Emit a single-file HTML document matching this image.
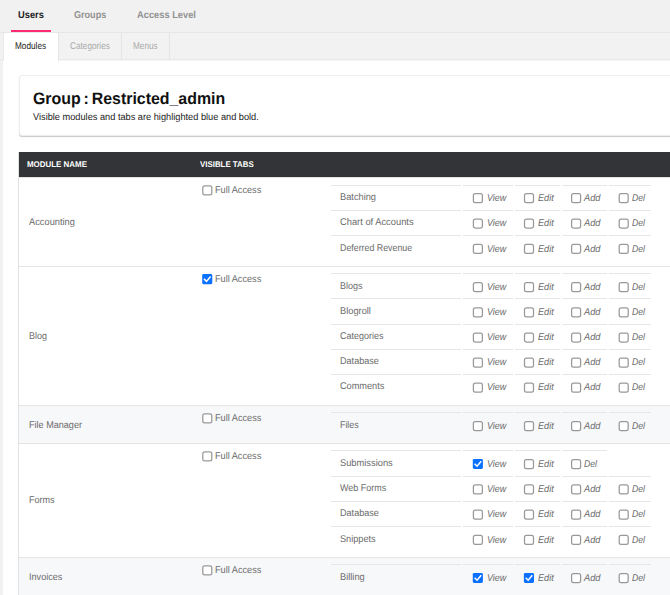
<!DOCTYPE html><html lang="en"><head><meta charset="utf-8"><title>Group : Restricted_admin</title>
<style>
html,body{margin:0;padding:0}
body{width:670px;height:595px;overflow:hidden;background:#f1f1f1;font-family:"Liberation Sans", sans-serif;position:relative;color:#555;text-rendering:geometricPrecision}
#p{position:absolute;left:0;top:0;width:670px;height:595px;overflow:hidden}
.t{position:absolute;white-space:nowrap;transform-origin:0 50%;display:block}
.nav{font-size:10px;font-weight:bold;color:#929292;line-height:12px}
.nav.on{color:#222}
.ul{position:absolute;left:11px;top:30px;width:40px;height:2px;background:#ff2a70}
.hr{position:absolute;left:0;top:32px;width:670px;height:1px;background:#e6e6e6}
.tabs{position:absolute;left:0;top:33px;width:670px;height:27px;background:#f2f2f2;border-bottom:1px solid #e9e9e9;box-sizing:border-box}
.tab{position:absolute;top:33px;height:27px;border-right:1px solid #e5e5e5;box-sizing:border-box}
.tab.on{background:#fff;height:28px;border-left:1px solid #e9e9e9}
.st{font-size:9.75px;color:#aaa;line-height:12px}
.st.on{color:#222}
.content{position:absolute;left:3px;top:60px;width:680px;height:560px;background:#fff;border-top:1px solid #f6f6f6;box-sizing:border-box}
.card{position:absolute;left:19px;top:75px;width:680px;height:61px;box-sizing:border-box;background:#fff;border:1px solid #ededed;border-radius:3px;box-shadow:0 1px 1px rgba(0,0,0,.22)}
.h1{font-size:16.5px;font-weight:bold;color:#111;line-height:20px;word-spacing:-1.6px}
.sub{font-size:9.8px;color:#222;line-height:12px}
.thead{position:absolute;left:19px;top:152px;width:680px;height:25px;background:#323437}
.th{font-size:8.25px;font-weight:bold;color:#fff;line-height:10px}
.tbl{position:absolute;left:18px;top:152px;width:1px;height:460px;background:#e2e2e2}
.row{position:absolute;left:19px;width:680px;border-top:1px solid #e4e4e4;box-sizing:border-box;background:#fff}
.row.alt{background:#f7f8fa}
.mod{font-size:9.8px;color:#6b6b6b;line-height:12px}
.fa{font-size:9.8px;color:#6b6b6b;line-height:12px}
.lbl{font-size:9.8px;color:#6b6b6b;line-height:12px}
.act{font-size:9.8px;font-style:italic;color:#6b6b6b;line-height:12px}
.cell{position:absolute;height:1px;background:#e6e6e6}
.cb{position:absolute;display:block;overflow:visible}
</style></head><body><div id="p">
<span class="t nav on" id="nav1" style="left:18.20px;top:10px;transform:scaleX(0.9306);">Users</span>
<span class="t nav" id="nav2" style="left:74.30px;top:10px;transform:scaleX(0.9060);">Groups</span>
<span class="t nav" id="nav3" style="left:137.00px;top:10px;transform:scaleX(0.9300);">Access Level</span>
<div class="ul"></div><div class="hr"></div>
<div class="tabs"></div>
<div class="content"></div>
<div class="tab on" style="left:3px;width:56px"></div>
<div class="tab" style="left:59px;width:63px"></div>
<div class="tab" style="left:122px;width:48px"></div>
<span class="t st on" id="st1" style="left:15.00px;top:41px;transform:scaleX(0.8429);">Modules</span>
<span class="t st" id="st2" style="left:70.00px;top:41px;transform:scaleX(0.8463);">Categories</span>
<span class="t st" id="st3" style="left:133.00px;top:41px;transform:scaleX(0.8409);">Menus</span>
<div class="card"></div>
<span class="t h1" id="h1" style="left:33.30px;top:89px;transform:scaleX(0.9638);">Group : Restricted_admin</span>
<span class="t sub" id="sub" style="left:33.30px;top:112px;transform:scaleX(0.9408);">Visible modules and tabs are highlighted blue and bold.</span>
<div class="thead"></div><div class="tbl"></div>
<span class="t th" id="th1" style="left:26.80px;top:160px;transform:scaleX(0.9622);">MODULE NAME</span>
<span class="t th" id="th2" style="left:200.40px;top:160px;transform:scaleX(0.9560);">VISIBLE TABS</span>
<div class="row" style="top:177px;height:89px"></div>
<span class="t mod" id="mod1" style="left:29.00px;top:217px;transform:scaleX(0.9480);">Accounting</span>
<svg class="cb" style="left:201px;top:184px" width="14" height="14" viewBox="0 0 14 14"><rect x="1.80" y="1.90" width="9.0" height="9.0" rx="1.9" fill="#fff" stroke="#999" stroke-width="1.25"/></svg>
<span class="t fa" id="fa1" style="left:215.00px;top:185px;transform:scaleX(0.9330);">Full Access</span>
<div class="cell" style="left:331px;top:185px;width:130px"></div>
<div class="cell" style="left:463px;top:185px;width:50px"></div>
<div class="cell" style="left:515px;top:185px;width:45px"></div>
<div class="cell" style="left:562px;top:185px;width:45px"></div>
<div class="cell" style="left:609px;top:185px;width:42px"></div>
<span class="t lbl" id="l1_1" style="left:339.80px;top:192px;transform:scaleX(0.9440);">Batching</span>
<svg class="cb" style="left:471px;top:191px" width="14" height="14" viewBox="0 0 14 14"><rect x="2.40" y="2.70" width="9.0" height="9.0" rx="1.9" fill="#fff" stroke="#999" stroke-width="1.25"/></svg>
<span class="t act" id="a1_1_0" style="left:486.60px;top:193px;transform:scaleX(0.92);">View</span>
<svg class="cb" style="left:522px;top:191px" width="14" height="14" viewBox="0 0 14 14"><rect x="2.50" y="2.70" width="9.0" height="9.0" rx="1.9" fill="#fff" stroke="#999" stroke-width="1.25"/></svg>
<span class="t act" id="a1_1_1" style="left:537.60px;top:193px;transform:scaleX(0.93);">Edit</span>
<svg class="cb" style="left:570px;top:191px" width="14" height="14" viewBox="0 0 14 14"><rect x="1.60" y="2.70" width="9.0" height="9.0" rx="1.9" fill="#fff" stroke="#999" stroke-width="1.25"/></svg>
<span class="t act" id="a1_1_2" style="left:584.10px;top:193px;transform:scaleX(0.938);">Add</span>
<svg class="cb" style="left:617px;top:191px" width="14" height="14" viewBox="0 0 14 14"><rect x="2.20" y="2.70" width="9.0" height="9.0" rx="1.9" fill="#fff" stroke="#999" stroke-width="1.25"/></svg>
<span class="t act" id="a1_1_3" style="left:632.00px;top:193px;transform:scaleX(0.888);">Del</span>
<div class="cell" style="left:331px;top:210px;width:130px"></div>
<div class="cell" style="left:463px;top:210px;width:50px"></div>
<div class="cell" style="left:515px;top:210px;width:45px"></div>
<div class="cell" style="left:562px;top:210px;width:45px"></div>
<div class="cell" style="left:609px;top:210px;width:42px"></div>
<span class="t lbl" id="l1_2" style="left:339.80px;top:217px;transform:scaleX(0.9513);">Chart of Accounts</span>
<svg class="cb" style="left:471px;top:217px" width="14" height="14" viewBox="0 0 14 14"><rect x="2.40" y="2.00" width="9.0" height="9.0" rx="1.9" fill="#fff" stroke="#999" stroke-width="1.25"/></svg>
<span class="t act" id="a1_2_0" style="left:486.60px;top:218px;transform:scaleX(0.92);">View</span>
<svg class="cb" style="left:522px;top:217px" width="14" height="14" viewBox="0 0 14 14"><rect x="2.50" y="2.00" width="9.0" height="9.0" rx="1.9" fill="#fff" stroke="#999" stroke-width="1.25"/></svg>
<span class="t act" id="a1_2_1" style="left:537.60px;top:218px;transform:scaleX(0.93);">Edit</span>
<svg class="cb" style="left:570px;top:217px" width="14" height="14" viewBox="0 0 14 14"><rect x="1.60" y="2.00" width="9.0" height="9.0" rx="1.9" fill="#fff" stroke="#999" stroke-width="1.25"/></svg>
<span class="t act" id="a1_2_2" style="left:584.10px;top:218px;transform:scaleX(0.938);">Add</span>
<svg class="cb" style="left:617px;top:217px" width="14" height="14" viewBox="0 0 14 14"><rect x="2.20" y="2.00" width="9.0" height="9.0" rx="1.9" fill="#fff" stroke="#999" stroke-width="1.25"/></svg>
<span class="t act" id="a1_2_3" style="left:632.00px;top:218px;transform:scaleX(0.888);">Del</span>
<div class="cell" style="left:331px;top:235px;width:130px"></div>
<div class="cell" style="left:463px;top:235px;width:50px"></div>
<div class="cell" style="left:515px;top:235px;width:45px"></div>
<div class="cell" style="left:562px;top:235px;width:45px"></div>
<div class="cell" style="left:609px;top:235px;width:42px"></div>
<span class="t lbl" id="l1_3" style="left:339.80px;top:243px;transform:scaleX(0.9011);">Deferred Revenue</span>
<svg class="cb" style="left:471px;top:242px" width="14" height="14" viewBox="0 0 14 14"><rect x="2.40" y="2.30" width="9.0" height="9.0" rx="1.9" fill="#fff" stroke="#999" stroke-width="1.25"/></svg>
<span class="t act" id="a1_3_0" style="left:486.60px;top:244px;transform:scaleX(0.92);">View</span>
<svg class="cb" style="left:522px;top:242px" width="14" height="14" viewBox="0 0 14 14"><rect x="2.50" y="2.30" width="9.0" height="9.0" rx="1.9" fill="#fff" stroke="#999" stroke-width="1.25"/></svg>
<span class="t act" id="a1_3_1" style="left:537.60px;top:244px;transform:scaleX(0.93);">Edit</span>
<svg class="cb" style="left:570px;top:242px" width="14" height="14" viewBox="0 0 14 14"><rect x="1.60" y="2.30" width="9.0" height="9.0" rx="1.9" fill="#fff" stroke="#999" stroke-width="1.25"/></svg>
<span class="t act" id="a1_3_2" style="left:584.10px;top:244px;transform:scaleX(0.938);">Add</span>
<svg class="cb" style="left:617px;top:242px" width="14" height="14" viewBox="0 0 14 14"><rect x="2.20" y="2.30" width="9.0" height="9.0" rx="1.9" fill="#fff" stroke="#999" stroke-width="1.25"/></svg>
<span class="t act" id="a1_3_3" style="left:632.00px;top:244px;transform:scaleX(0.888);">Del</span>
<div class="row" style="top:266px;height:139px"></div>
<span class="t mod" id="mod2" style="left:29.00px;top:331px;transform:scaleX(0.9236);">Blog</span>
<svg class="cb" style="left:201px;top:273px" width="14" height="14" viewBox="0 0 14 14"><rect x="1.20" y="1.10" width="10.1" height="10.1" rx="1.4" fill="#0a70ff"/><path d="M3.50 6.40 L5.50 8.40 L9.10 4.00" fill="none" stroke="#fff" stroke-width="1.5" stroke-linecap="square" stroke-linejoin="miter"/></svg>
<span class="t fa" id="fa2" style="left:215.00px;top:274px;transform:scaleX(0.9330);">Full Access</span>
<div class="cell" style="left:331px;top:273px;width:130px"></div>
<div class="cell" style="left:463px;top:273px;width:50px"></div>
<div class="cell" style="left:515px;top:273px;width:45px"></div>
<div class="cell" style="left:562px;top:273px;width:45px"></div>
<div class="cell" style="left:609px;top:273px;width:42px"></div>
<span class="t lbl" id="l2_1" style="left:339.80px;top:281px;transform:scaleX(0.9193);">Blogs</span>
<svg class="cb" style="left:471px;top:280px" width="14" height="14" viewBox="0 0 14 14"><rect x="2.40" y="2.70" width="9.0" height="9.0" rx="1.9" fill="#fff" stroke="#999" stroke-width="1.25"/></svg>
<span class="t act" id="a2_1_0" style="left:486.60px;top:282px;transform:scaleX(0.92);">View</span>
<svg class="cb" style="left:522px;top:280px" width="14" height="14" viewBox="0 0 14 14"><rect x="2.50" y="2.70" width="9.0" height="9.0" rx="1.9" fill="#fff" stroke="#999" stroke-width="1.25"/></svg>
<span class="t act" id="a2_1_1" style="left:537.60px;top:282px;transform:scaleX(0.93);">Edit</span>
<svg class="cb" style="left:570px;top:280px" width="14" height="14" viewBox="0 0 14 14"><rect x="1.60" y="2.70" width="9.0" height="9.0" rx="1.9" fill="#fff" stroke="#999" stroke-width="1.25"/></svg>
<span class="t act" id="a2_1_2" style="left:584.10px;top:282px;transform:scaleX(0.938);">Add</span>
<svg class="cb" style="left:617px;top:280px" width="14" height="14" viewBox="0 0 14 14"><rect x="2.20" y="2.70" width="9.0" height="9.0" rx="1.9" fill="#fff" stroke="#999" stroke-width="1.25"/></svg>
<span class="t act" id="a2_1_3" style="left:632.00px;top:282px;transform:scaleX(0.888);">Del</span>
<div class="cell" style="left:331px;top:298px;width:130px"></div>
<div class="cell" style="left:463px;top:298px;width:50px"></div>
<div class="cell" style="left:515px;top:298px;width:45px"></div>
<div class="cell" style="left:562px;top:298px;width:45px"></div>
<div class="cell" style="left:609px;top:298px;width:42px"></div>
<span class="t lbl" id="l2_2" style="left:339.80px;top:306px;transform:scaleX(0.9462);">Blogroll</span>
<svg class="cb" style="left:471px;top:306px" width="14" height="14" viewBox="0 0 14 14"><rect x="2.40" y="1.80" width="9.0" height="9.0" rx="1.9" fill="#fff" stroke="#999" stroke-width="1.25"/></svg>
<span class="t act" id="a2_2_0" style="left:486.60px;top:307px;transform:scaleX(0.92);">View</span>
<svg class="cb" style="left:522px;top:306px" width="14" height="14" viewBox="0 0 14 14"><rect x="2.50" y="1.80" width="9.0" height="9.0" rx="1.9" fill="#fff" stroke="#999" stroke-width="1.25"/></svg>
<span class="t act" id="a2_2_1" style="left:537.60px;top:307px;transform:scaleX(0.93);">Edit</span>
<svg class="cb" style="left:570px;top:306px" width="14" height="14" viewBox="0 0 14 14"><rect x="1.60" y="1.80" width="9.0" height="9.0" rx="1.9" fill="#fff" stroke="#999" stroke-width="1.25"/></svg>
<span class="t act" id="a2_2_2" style="left:584.10px;top:307px;transform:scaleX(0.938);">Add</span>
<svg class="cb" style="left:617px;top:306px" width="14" height="14" viewBox="0 0 14 14"><rect x="2.20" y="1.80" width="9.0" height="9.0" rx="1.9" fill="#fff" stroke="#999" stroke-width="1.25"/></svg>
<span class="t act" id="a2_2_3" style="left:632.00px;top:307px;transform:scaleX(0.888);">Del</span>
<div class="cell" style="left:331px;top:324px;width:130px"></div>
<div class="cell" style="left:463px;top:324px;width:50px"></div>
<div class="cell" style="left:515px;top:324px;width:45px"></div>
<div class="cell" style="left:562px;top:324px;width:45px"></div>
<div class="cell" style="left:609px;top:324px;width:42px"></div>
<span class="t lbl" id="l2_3" style="left:339.80px;top:331px;transform:scaleX(0.9167);">Categories</span>
<svg class="cb" style="left:471px;top:331px" width="14" height="14" viewBox="0 0 14 14"><rect x="2.40" y="2.00" width="9.0" height="9.0" rx="1.9" fill="#fff" stroke="#999" stroke-width="1.25"/></svg>
<span class="t act" id="a2_3_0" style="left:486.60px;top:332px;transform:scaleX(0.92);">View</span>
<svg class="cb" style="left:522px;top:331px" width="14" height="14" viewBox="0 0 14 14"><rect x="2.50" y="2.00" width="9.0" height="9.0" rx="1.9" fill="#fff" stroke="#999" stroke-width="1.25"/></svg>
<span class="t act" id="a2_3_1" style="left:537.60px;top:332px;transform:scaleX(0.93);">Edit</span>
<svg class="cb" style="left:570px;top:331px" width="14" height="14" viewBox="0 0 14 14"><rect x="1.60" y="2.00" width="9.0" height="9.0" rx="1.9" fill="#fff" stroke="#999" stroke-width="1.25"/></svg>
<span class="t act" id="a2_3_2" style="left:584.10px;top:332px;transform:scaleX(0.938);">Add</span>
<svg class="cb" style="left:617px;top:331px" width="14" height="14" viewBox="0 0 14 14"><rect x="2.20" y="2.00" width="9.0" height="9.0" rx="1.9" fill="#fff" stroke="#999" stroke-width="1.25"/></svg>
<span class="t act" id="a2_3_3" style="left:632.00px;top:332px;transform:scaleX(0.888);">Del</span>
<div class="cell" style="left:331px;top:349px;width:130px"></div>
<div class="cell" style="left:463px;top:349px;width:50px"></div>
<div class="cell" style="left:515px;top:349px;width:45px"></div>
<div class="cell" style="left:562px;top:349px;width:45px"></div>
<div class="cell" style="left:609px;top:349px;width:42px"></div>
<span class="t lbl" id="l2_4" style="left:339.80px;top:356px;transform:scaleX(0.9275);">Database</span>
<svg class="cb" style="left:471px;top:356px" width="14" height="14" viewBox="0 0 14 14"><rect x="2.40" y="2.10" width="9.0" height="9.0" rx="1.9" fill="#fff" stroke="#999" stroke-width="1.25"/></svg>
<span class="t act" id="a2_4_0" style="left:486.60px;top:357px;transform:scaleX(0.92);">View</span>
<svg class="cb" style="left:522px;top:356px" width="14" height="14" viewBox="0 0 14 14"><rect x="2.50" y="2.10" width="9.0" height="9.0" rx="1.9" fill="#fff" stroke="#999" stroke-width="1.25"/></svg>
<span class="t act" id="a2_4_1" style="left:537.60px;top:357px;transform:scaleX(0.93);">Edit</span>
<svg class="cb" style="left:570px;top:356px" width="14" height="14" viewBox="0 0 14 14"><rect x="1.60" y="2.10" width="9.0" height="9.0" rx="1.9" fill="#fff" stroke="#999" stroke-width="1.25"/></svg>
<span class="t act" id="a2_4_2" style="left:584.10px;top:357px;transform:scaleX(0.938);">Add</span>
<svg class="cb" style="left:617px;top:356px" width="14" height="14" viewBox="0 0 14 14"><rect x="2.20" y="2.10" width="9.0" height="9.0" rx="1.9" fill="#fff" stroke="#999" stroke-width="1.25"/></svg>
<span class="t act" id="a2_4_3" style="left:632.00px;top:357px;transform:scaleX(0.888);">Del</span>
<div class="cell" style="left:331px;top:374px;width:130px"></div>
<div class="cell" style="left:463px;top:374px;width:50px"></div>
<div class="cell" style="left:515px;top:374px;width:45px"></div>
<div class="cell" style="left:562px;top:374px;width:45px"></div>
<div class="cell" style="left:609px;top:374px;width:42px"></div>
<span class="t lbl" id="l2_5" style="left:339.80px;top:381px;transform:scaleX(0.9363);">Comments</span>
<svg class="cb" style="left:471px;top:381px" width="14" height="14" viewBox="0 0 14 14"><rect x="2.40" y="2.20" width="9.0" height="9.0" rx="1.9" fill="#fff" stroke="#999" stroke-width="1.25"/></svg>
<span class="t act" id="a2_5_0" style="left:486.60px;top:382px;transform:scaleX(0.92);">View</span>
<svg class="cb" style="left:522px;top:381px" width="14" height="14" viewBox="0 0 14 14"><rect x="2.50" y="2.20" width="9.0" height="9.0" rx="1.9" fill="#fff" stroke="#999" stroke-width="1.25"/></svg>
<span class="t act" id="a2_5_1" style="left:537.60px;top:382px;transform:scaleX(0.93);">Edit</span>
<svg class="cb" style="left:570px;top:381px" width="14" height="14" viewBox="0 0 14 14"><rect x="1.60" y="2.20" width="9.0" height="9.0" rx="1.9" fill="#fff" stroke="#999" stroke-width="1.25"/></svg>
<span class="t act" id="a2_5_2" style="left:584.10px;top:382px;transform:scaleX(0.938);">Add</span>
<svg class="cb" style="left:617px;top:381px" width="14" height="14" viewBox="0 0 14 14"><rect x="2.20" y="2.20" width="9.0" height="9.0" rx="1.9" fill="#fff" stroke="#999" stroke-width="1.25"/></svg>
<span class="t act" id="a2_5_3" style="left:632.00px;top:382px;transform:scaleX(0.888);">Del</span>
<div class="row alt" style="top:405px;height:38px"></div>
<span class="t mod" id="mod3" style="left:29.00px;top:420px;transform:scaleX(0.9261);">File Manager</span>
<svg class="cb" style="left:201px;top:412px" width="14" height="14" viewBox="0 0 14 14"><rect x="1.80" y="1.90" width="9.0" height="9.0" rx="1.9" fill="#fff" stroke="#999" stroke-width="1.25"/></svg>
<span class="t fa" id="fa3" style="left:215.00px;top:413px;transform:scaleX(0.9362);">Full Access</span>
<div class="cell" style="left:331px;top:412px;width:130px"></div>
<div class="cell" style="left:463px;top:412px;width:50px"></div>
<div class="cell" style="left:515px;top:412px;width:45px"></div>
<div class="cell" style="left:562px;top:412px;width:45px"></div>
<div class="cell" style="left:609px;top:412px;width:42px"></div>
<span class="t lbl" id="l3_1" style="left:339.80px;top:420px;transform:scaleX(0.9012);">Files</span>
<svg class="cb" style="left:471px;top:419px" width="14" height="14" viewBox="0 0 14 14"><rect x="2.40" y="2.60" width="9.0" height="9.0" rx="1.9" fill="#fff" stroke="#999" stroke-width="1.25"/></svg>
<span class="t act" id="a3_1_0" style="left:486.60px;top:421px;transform:scaleX(0.92);">View</span>
<svg class="cb" style="left:522px;top:419px" width="14" height="14" viewBox="0 0 14 14"><rect x="2.50" y="2.60" width="9.0" height="9.0" rx="1.9" fill="#fff" stroke="#999" stroke-width="1.25"/></svg>
<span class="t act" id="a3_1_1" style="left:537.60px;top:421px;transform:scaleX(0.93);">Edit</span>
<svg class="cb" style="left:570px;top:419px" width="14" height="14" viewBox="0 0 14 14"><rect x="1.60" y="2.60" width="9.0" height="9.0" rx="1.9" fill="#fff" stroke="#999" stroke-width="1.25"/></svg>
<span class="t act" id="a3_1_2" style="left:584.10px;top:421px;transform:scaleX(0.938);">Add</span>
<svg class="cb" style="left:617px;top:419px" width="14" height="14" viewBox="0 0 14 14"><rect x="2.20" y="2.60" width="9.0" height="9.0" rx="1.9" fill="#fff" stroke="#999" stroke-width="1.25"/></svg>
<span class="t act" id="a3_1_3" style="left:632.00px;top:421px;transform:scaleX(0.888);">Del</span>
<div class="row" style="top:443px;height:114px"></div>
<span class="t mod" id="mod4" style="left:29.00px;top:495px;transform:scaleX(0.9230);">Forms</span>
<svg class="cb" style="left:201px;top:450px" width="14" height="14" viewBox="0 0 14 14"><rect x="1.80" y="1.90" width="9.0" height="9.0" rx="1.9" fill="#fff" stroke="#999" stroke-width="1.25"/></svg>
<span class="t fa" id="fa4" style="left:215.00px;top:451px;transform:scaleX(0.9330);">Full Access</span>
<div class="cell" style="left:331px;top:450px;width:130px"></div>
<div class="cell" style="left:463px;top:450px;width:50px"></div>
<div class="cell" style="left:515px;top:450px;width:45px"></div>
<div class="cell" style="left:562px;top:450px;width:45px"></div>
<span class="t lbl" id="l4_1" style="left:339.80px;top:458px;transform:scaleX(0.9490);">Submissions</span>
<svg class="cb" style="left:471px;top:457px" width="14" height="14" viewBox="0 0 14 14"><rect x="1.80" y="1.90" width="10.1" height="10.1" rx="1.4" fill="#0a70ff"/><path d="M4.10 7.20 L6.10 9.20 L9.70 4.80" fill="none" stroke="#fff" stroke-width="1.5" stroke-linecap="square" stroke-linejoin="miter"/></svg>
<span class="t act" id="a4_1_0" style="left:486.60px;top:459px;transform:scaleX(0.92);">View</span>
<svg class="cb" style="left:522px;top:457px" width="14" height="14" viewBox="0 0 14 14"><rect x="2.50" y="2.70" width="9.0" height="9.0" rx="1.9" fill="#fff" stroke="#999" stroke-width="1.25"/></svg>
<span class="t act" id="a4_1_1" style="left:537.60px;top:459px;transform:scaleX(0.93);">Edit</span>
<svg class="cb" style="left:570px;top:457px" width="14" height="14" viewBox="0 0 14 14"><rect x="1.60" y="2.70" width="9.0" height="9.0" rx="1.9" fill="#fff" stroke="#999" stroke-width="1.25"/></svg>
<span class="t act" id="a4_1_2" style="left:584.10px;top:459px;transform:scaleX(0.888);">Del</span>
<div class="cell" style="left:331px;top:476px;width:130px"></div>
<div class="cell" style="left:463px;top:476px;width:50px"></div>
<div class="cell" style="left:515px;top:476px;width:45px"></div>
<div class="cell" style="left:562px;top:476px;width:45px"></div>
<div class="cell" style="left:609px;top:476px;width:42px"></div>
<span class="t lbl" id="l4_2" style="left:339.80px;top:483px;transform:scaleX(0.9142);">Web Forms</span>
<svg class="cb" style="left:471px;top:483px" width="14" height="14" viewBox="0 0 14 14"><rect x="2.40" y="1.90" width="9.0" height="9.0" rx="1.9" fill="#fff" stroke="#999" stroke-width="1.25"/></svg>
<span class="t act" id="a4_2_0" style="left:486.60px;top:484px;transform:scaleX(0.92);">View</span>
<svg class="cb" style="left:522px;top:483px" width="14" height="14" viewBox="0 0 14 14"><rect x="2.50" y="1.90" width="9.0" height="9.0" rx="1.9" fill="#fff" stroke="#999" stroke-width="1.25"/></svg>
<span class="t act" id="a4_2_1" style="left:537.60px;top:484px;transform:scaleX(0.93);">Edit</span>
<svg class="cb" style="left:570px;top:483px" width="14" height="14" viewBox="0 0 14 14"><rect x="1.60" y="1.90" width="9.0" height="9.0" rx="1.9" fill="#fff" stroke="#999" stroke-width="1.25"/></svg>
<span class="t act" id="a4_2_2" style="left:584.10px;top:484px;transform:scaleX(0.938);">Add</span>
<svg class="cb" style="left:617px;top:483px" width="14" height="14" viewBox="0 0 14 14"><rect x="2.20" y="1.90" width="9.0" height="9.0" rx="1.9" fill="#fff" stroke="#999" stroke-width="1.25"/></svg>
<span class="t act" id="a4_2_3" style="left:632.00px;top:484px;transform:scaleX(0.888);">Del</span>
<div class="cell" style="left:331px;top:501px;width:130px"></div>
<div class="cell" style="left:463px;top:501px;width:50px"></div>
<div class="cell" style="left:515px;top:501px;width:45px"></div>
<div class="cell" style="left:562px;top:501px;width:45px"></div>
<div class="cell" style="left:609px;top:501px;width:42px"></div>
<span class="t lbl" id="l4_3" style="left:339.80px;top:508px;transform:scaleX(0.9275);">Database</span>
<svg class="cb" style="left:471px;top:508px" width="14" height="14" viewBox="0 0 14 14"><rect x="2.40" y="2.10" width="9.0" height="9.0" rx="1.9" fill="#fff" stroke="#999" stroke-width="1.25"/></svg>
<span class="t act" id="a4_3_0" style="left:486.60px;top:509px;transform:scaleX(0.92);">View</span>
<svg class="cb" style="left:522px;top:508px" width="14" height="14" viewBox="0 0 14 14"><rect x="2.50" y="2.10" width="9.0" height="9.0" rx="1.9" fill="#fff" stroke="#999" stroke-width="1.25"/></svg>
<span class="t act" id="a4_3_1" style="left:537.60px;top:509px;transform:scaleX(0.93);">Edit</span>
<svg class="cb" style="left:570px;top:508px" width="14" height="14" viewBox="0 0 14 14"><rect x="1.60" y="2.10" width="9.0" height="9.0" rx="1.9" fill="#fff" stroke="#999" stroke-width="1.25"/></svg>
<span class="t act" id="a4_3_2" style="left:584.10px;top:509px;transform:scaleX(0.938);">Add</span>
<svg class="cb" style="left:617px;top:508px" width="14" height="14" viewBox="0 0 14 14"><rect x="2.20" y="2.10" width="9.0" height="9.0" rx="1.9" fill="#fff" stroke="#999" stroke-width="1.25"/></svg>
<span class="t act" id="a4_3_3" style="left:632.00px;top:509px;transform:scaleX(0.888);">Del</span>
<div class="cell" style="left:331px;top:526px;width:130px"></div>
<div class="cell" style="left:463px;top:526px;width:50px"></div>
<div class="cell" style="left:515px;top:526px;width:45px"></div>
<div class="cell" style="left:562px;top:526px;width:45px"></div>
<div class="cell" style="left:609px;top:526px;width:42px"></div>
<span class="t lbl" id="l4_4" style="left:339.80px;top:534px;transform:scaleX(0.9347);">Snippets</span>
<svg class="cb" style="left:471px;top:533px" width="14" height="14" viewBox="0 0 14 14"><rect x="2.40" y="2.30" width="9.0" height="9.0" rx="1.9" fill="#fff" stroke="#999" stroke-width="1.25"/></svg>
<span class="t act" id="a4_4_0" style="left:486.60px;top:535px;transform:scaleX(0.92);">View</span>
<svg class="cb" style="left:522px;top:533px" width="14" height="14" viewBox="0 0 14 14"><rect x="2.50" y="2.30" width="9.0" height="9.0" rx="1.9" fill="#fff" stroke="#999" stroke-width="1.25"/></svg>
<span class="t act" id="a4_4_1" style="left:537.60px;top:535px;transform:scaleX(0.93);">Edit</span>
<svg class="cb" style="left:570px;top:533px" width="14" height="14" viewBox="0 0 14 14"><rect x="1.60" y="2.30" width="9.0" height="9.0" rx="1.9" fill="#fff" stroke="#999" stroke-width="1.25"/></svg>
<span class="t act" id="a4_4_2" style="left:584.10px;top:535px;transform:scaleX(0.938);">Add</span>
<svg class="cb" style="left:617px;top:533px" width="14" height="14" viewBox="0 0 14 14"><rect x="2.20" y="2.30" width="9.0" height="9.0" rx="1.9" fill="#fff" stroke="#999" stroke-width="1.25"/></svg>
<span class="t act" id="a4_4_3" style="left:632.00px;top:535px;transform:scaleX(0.888);">Del</span>
<div class="row alt" style="top:557px;height:60px"></div>
<span class="t mod" id="mod5" style="left:29.00px;top:572px;transform:scaleX(0.9281);">Invoices</span>
<svg class="cb" style="left:201px;top:564px" width="14" height="14" viewBox="0 0 14 14"><rect x="1.80" y="1.90" width="9.0" height="9.0" rx="1.9" fill="#fff" stroke="#999" stroke-width="1.25"/></svg>
<span class="t fa" id="fa5" style="left:215.00px;top:565px;transform:scaleX(0.9362);">Full Access</span>
<div class="cell" style="left:331px;top:564px;width:130px"></div>
<div class="cell" style="left:463px;top:564px;width:50px"></div>
<div class="cell" style="left:515px;top:564px;width:45px"></div>
<div class="cell" style="left:562px;top:564px;width:45px"></div>
<div class="cell" style="left:609px;top:564px;width:42px"></div>
<span class="t lbl" id="l5_1" style="left:339.80px;top:572px;transform:scaleX(0.9444);">Billing</span>
<svg class="cb" style="left:471px;top:571px" width="14" height="14" viewBox="0 0 14 14"><rect x="1.80" y="1.90" width="10.1" height="10.1" rx="1.4" fill="#0a70ff"/><path d="M4.10 7.20 L6.10 9.20 L9.70 4.80" fill="none" stroke="#fff" stroke-width="1.5" stroke-linecap="square" stroke-linejoin="miter"/></svg>
<span class="t act" id="a5_1_0" style="left:486.60px;top:573px;transform:scaleX(0.92);">View</span>
<svg class="cb" style="left:522px;top:571px" width="14" height="14" viewBox="0 0 14 14"><rect x="1.90" y="1.90" width="10.1" height="10.1" rx="1.4" fill="#0a70ff"/><path d="M4.20 7.20 L6.20 9.20 L9.80 4.80" fill="none" stroke="#fff" stroke-width="1.5" stroke-linecap="square" stroke-linejoin="miter"/></svg>
<span class="t act" id="a5_1_1" style="left:537.60px;top:573px;transform:scaleX(0.93);">Edit</span>
<svg class="cb" style="left:570px;top:571px" width="14" height="14" viewBox="0 0 14 14"><rect x="1.60" y="2.70" width="9.0" height="9.0" rx="1.9" fill="#fff" stroke="#999" stroke-width="1.25"/></svg>
<span class="t act" id="a5_1_2" style="left:584.10px;top:573px;transform:scaleX(0.938);">Add</span>
<svg class="cb" style="left:617px;top:571px" width="14" height="14" viewBox="0 0 14 14"><rect x="2.20" y="2.70" width="9.0" height="9.0" rx="1.9" fill="#fff" stroke="#999" stroke-width="1.25"/></svg>
<span class="t act" id="a5_1_3" style="left:632.00px;top:573px;transform:scaleX(0.888);">Del</span>
</div></body></html>
